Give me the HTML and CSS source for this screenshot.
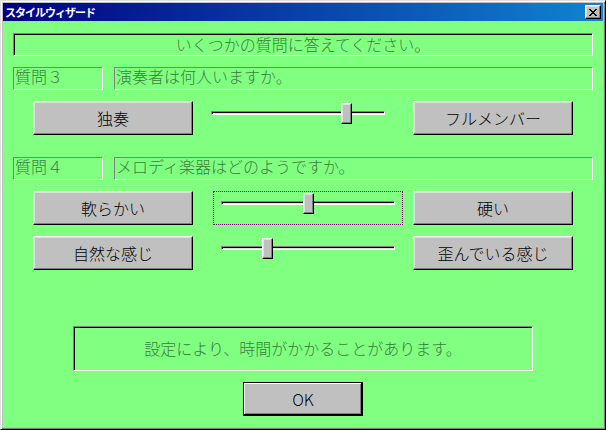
FILE: index.html
```html
<!DOCTYPE html>
<html lang="ja">
    <head>
        <title>スタイルウィザード</title>
        <meta charset="UTF-8">
        <link rel="stylesheet" href="styles.css">
    </head>
    <body>
        <div class="window">
            <div class="titlebar">
                <span class="title">スタイルウィザード</span>
                <button class="close">
                    <svg width="8" height="7" viewBox="0 0 8 7"><path d="M0 0h2v1H0zM6 0h2v1H6zM1 1h2v1H1zM5 1h2v1H5zM2 2h4v1H2zM3 3h2v1H3zM2 4h4v1H2zM1 5h2v1H1zM5 5h2v1H5zM0 6h2v1H0zM6 6h2v1H6z" fill="#000"/></svg>
                </button>
            </div>

            <main class="client">
                <div class="sunken heading">いくつかの質問に答えてください。</div>

                <div class="question">
                    <div class="label">質問３</div>
                    <div class="label prompt">演奏者は何人いますか。</div>
                </div>

                <div class="choice">
                    <button class="btn">独奏</button>
                    <div class="slider lead">
                        <div class="track"></div>
                        <div class="thumb" style="left: 137px"></div>
                    </div>
                    <button class="btn">フルメンバー</button>
                </div>

                <div class="question spaced">
                    <div class="label">質問４</div>
                    <div class="label prompt">メロディ楽器はどのようですか。</div>
                </div>

                <div class="choice">
                    <button class="btn">軟らかい</button>
                    <div class="slider focused">
                        <div class="track"></div>
                        <div class="thumb" style="left: 89px"></div>
                    </div>
                    <button class="btn">硬い</button>
                </div>

                <div class="choice">
                    <button class="btn">自然な感じ</button>
                    <div class="slider">
                        <div class="track"></div>
                        <div class="thumb" style="left: 48px"></div>
                    </div>
                    <button class="btn">歪んでいる感じ</button>
                </div>

                <div class="sunken notice">設定により、時間がかかることがあります。</div>

                <button class="btn ok">OK</button>
            </main>
        </div>
    </body>
</html>
```

FILE: styles.css
```css
body {
    margin: 0;
    font-family: "Noto Sans CJK JP", sans-serif;
    font-size: 16px;
}

.window {
    width: 606px;
    height: 430px;
    box-sizing: border-box;
    border: 1px solid;
    border-color: #dfdfdf #000 #000 #dfdfdf;
    box-shadow: inset 1px 1px #fff, inset -1px -1px #808080;
    padding: 2px;
    background-color: #c0c0c0;
    display: flex;
    flex-direction: column;
}

.titlebar {
    height: 18px;
    flex: none;
    display: flex;
    align-items: center;
    background: linear-gradient(to right, #000080, #1084d0);
}

.title {
    color: #fff;
    font-size: 11px;
    font-weight: bold;
    letter-spacing: -1px;
    padding-left: 2px;
    line-height: 18px;
}

.close {
    margin-left: auto;
    margin-right: 2px;
    width: 16px;
    height: 14px;
    padding: 0;
    border: 1px solid;
    border-color: #fff #000 #000 #fff;
    box-shadow: inset -1px -1px #808080, inset 1px 1px #dfdfdf;
    background-color: #c0c0c0;
    display: flex;
    align-items: center;
    justify-content: center;
}

.client {
    flex: 1;
    background-color: #80ff80;
    padding: 12px 10px 0;
    display: flex;
    flex-direction: column;
    gap: 11px;
    color: #3a803f;
    font-weight: 300;
}

.sunken {
    box-sizing: border-box;
    border: 1px solid;
    border-color: #808080 #fff #fff #808080;
    box-shadow: inset 1px 1px #000;
    text-align: center;
}

.heading {
    height: 23px;
    line-height: 21px;
}

.question {
    display: flex;
    gap: 11px;
}
    .question.spaced {
        margin-top: 11px;
    }

.label {
    width: 90px;
    height: 23px;
    box-sizing: border-box;
    border: 1px solid;
    border-color: #808080 #fff #fff #808080;
    line-height: 16px;
    padding-left: 1px;
    white-space: nowrap;
}
    .label.prompt {
        flex: 1;
    }

.choice {
    display: flex;
    padding-left: 20px;
}

.btn {
    width: 160px;
    height: 34px;
    padding: 0;
    border: 1px solid;
    border-color: #fff #000 #000 #fff;
    box-shadow: inset -1px -1px #808080, inset 1px 1px #dfdfdf;
    background-color: #c0c0c0;
    font-family: inherit;
    font-size: 16px;
    font-weight: 300;
    color: #000;
}

.slider {
    position: relative;
    width: 190px;
    height: 34px;
    box-sizing: border-box;
    border: 1px dotted transparent;
    margin: 0 10px 0 20px;
}
    .slider.lead {
        margin: 0 20px 0 10px;
    }
    .slider.focused {
        border-color: #80007f;
    }

.track {
    margin: 9px 7px 0;
    height: 4px;
    box-sizing: border-box;
    border: 1px solid;
    border-color: #808080 #fff #fff #808080;
    box-shadow: inset 1px 1px #000;
    background-color: #dfdfdf;
}

.thumb {
    position: absolute;
    top: 1px;
    width: 11px;
    height: 21px;
    box-sizing: border-box;
    border: 1px solid;
    border-color: #fff #000 #000 #fff;
    box-shadow: inset -1px -1px #808080, inset 1px 1px #dfdfdf;
    background-color: #c0c0c0;
}

.notice {
    align-self: center;
    width: 460px;
    height: 45px;
    line-height: 43px;
    margin-top: 45px;
}

.ok {
    align-self: center;
    width: 120px;
    border-color: #000;
    box-shadow: inset -1px -1px #000, inset 1px 1px #fff, inset -2px -2px #808080;
}
```
